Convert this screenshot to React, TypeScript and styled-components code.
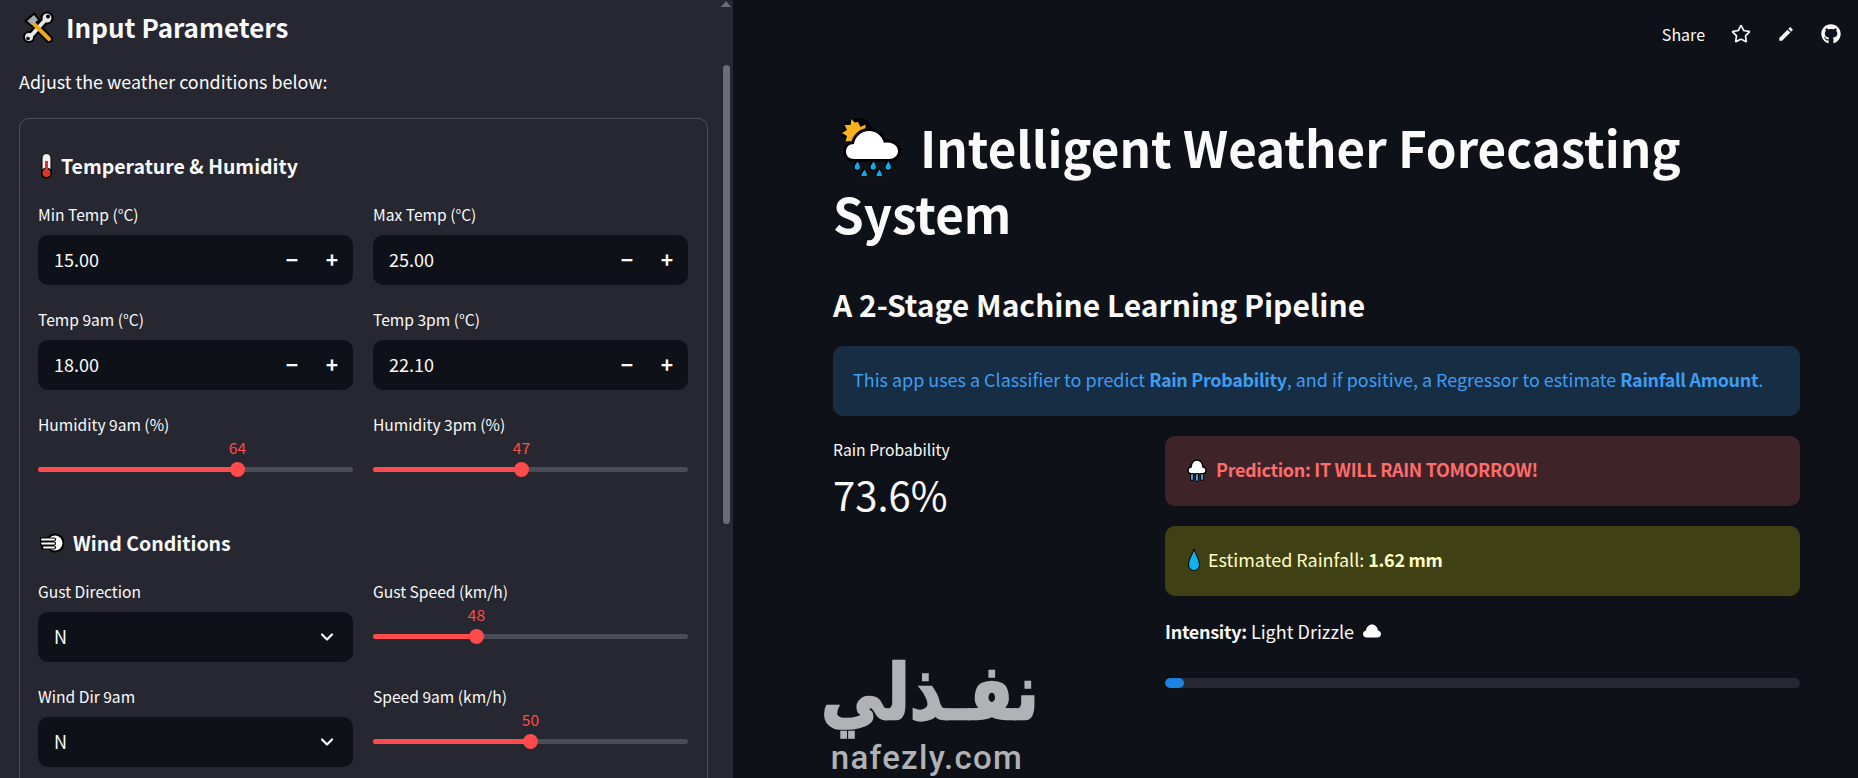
import React from 'react';
import styled, { createGlobalStyle } from 'styled-components';
import { ChevronDown, Star } from 'lucide-react';
import { FaGithub } from 'react-icons/fa';
import { MdEdit } from 'react-icons/md';

const fontStack = '"Noto Sans CJK SC", "Noto Sans", sans-serif';

const GlobalStyle = createGlobalStyle`
  html, body {
    margin: 0;
    padding: 0;
    height: 100%;
    background: #0e1117;
    overflow: hidden;
  }
  * {
    box-sizing: border-box;
  }
  b {
    letter-spacing: -0.3px;
  }
`;

const Page = styled.div`
  display: flex;
  position: relative;
  width: 1858px;
  height: 778px;
  overflow: hidden;
  background: #0e1117;
  color: #fafafa;
  font-family: ${fontStack};
`;

/* sidebar */
const Sidebar = styled.aside`
  position: relative;
  flex: 0 0 733px;
  height: 778px;
  padding: 0 25px 0 19px;
  overflow: hidden;
  background: #262730;
`;
const SideTitle = styled.h2`
  display: flex;
  align-items: center;
  gap: 11px;
  height: 56px;
  margin: 0 0 0 3px;
  padding-bottom: 2px;
  font-size: 26px;
  font-weight: 700;
  line-height: 36px;
`;
const Caption = styled.p`
  margin: 11px 0 23px;
  font-size: 17.9px;
  line-height: 28px;
`;
const Panel = styled.section`
  height: 800px;
  padding: 33px 18px 0;
  border: 1px solid rgba(250, 250, 250, 0.2);
  border-radius: 10px;
`;
const SectionHeading = styled.h3<{ $gap: number; $top?: number }>`
  display: flex;
  align-items: center;
  gap: ${({ $gap }) => $gap}px;
  height: 30px;
  margin: ${({ $top }) => $top ?? 0}px 0 23px;
  padding: 0 0 2px 2px;
  font-size: 19.5px;
  font-weight: 700;
  line-height: 28px;
`;
const FieldGrid = styled.div`
  display: grid;
  grid-template-columns: 315px 315px;
  column-gap: 20px;
  row-gap: 25px;
`;
const Field = styled.div`
  display: flex;
  flex-direction: column;
  gap: 8px;
`;
const Label = styled.label`
  height: 22px;
  font-size: 15.6px;
  line-height: 19px;
`;
const DarkControl = styled.div`
  display: flex;
  align-items: center;
  height: 50px;
  padding: 0 1px 2px 16px;
  border-radius: 10px;
  background: #0e1117;
  font-size: 18px;
`;
const ControlValue = styled.span`
  flex: 1;
`;
const StepButton = styled.span`
  display: flex;
  justify-content: center;
  align-items: center;
  width: 40px;
  height: 48px;
  font-size: 21px;
  font-weight: 700;
`;
const ChevronSlot = styled.span`
  display: flex;
  justify-content: center;
  width: 51px;
  padding-top: 2px;
`;
const SliderBox = styled.div`
  position: relative;
  height: 50px;
  padding-top: 22px;
`;
const Track = styled.div`
  height: 5px;
  overflow: hidden;
  border-radius: 3px;
  background: #4b4c55;
`;
const TrackFill = styled.div`
  height: 100%;
  background: #ff4b4b;
`;
const Thumb = styled.span`
  position: absolute;
  top: 17px;
  width: 15px;
  height: 15px;
  border-radius: 50%;
  background: #ff4b4b;
`;
const ThumbValue = styled.span`
  position: absolute;
  top: -9px;
  transform: translateX(-50%);
  color: #ff4b4b;
  font-size: 15.6px;
  line-height: 22px;
`;
const ScrollTrack = styled.div`
  position: absolute;
  top: 65px;
  right: 3px;
  width: 7px;
  height: 459px;
  border-radius: 4px;
  background: #6b6c74;
`;
const ScrollArrow = styled.div`
  position: absolute;
  top: 1px;
  right: 2px;
  width: 0;
  height: 0;
  border-left: 5px solid transparent;
  border-right: 5px solid transparent;
  border-bottom: 6px solid #6b6c74;
`;

/* main */
const Main = styled.main`
  flex: 1;
  min-width: 0;
`;
const Toolbar = styled.header`
  display: flex;
  justify-content: flex-end;
  align-items: center;
  gap: 26px;
  height: 68px;
  padding-right: 17px;
`;
const ShareText = styled.span`
  font-size: 16px;
  line-height: 20px;
`;
const Content = styled.div`
  padding: 0 58px 0 100px;
`;
const Title = styled.h1`
  margin: 46px 0 0;
  font-size: 49.3px;
  font-weight: 700;
  line-height: 66px;
`;
const TitleIcon = styled.span`
  display: inline-block;
  width: 87px;
  height: 30px;
  vertical-align: -4px;
  svg {
    display: block;
    margin: -26px 0 0 7px;
  }
`;
const Subtitle = styled.h2`
  margin: 36px 0 20px;
  font-size: 30px;
  font-weight: 700;
  line-height: 44px;
`;
const Banner = styled.div<{ $bg: string; $fg: string }>`
  display: flex;
  align-items: center;
  height: 70px;
  padding: 0 0 5px 20px;
  border-radius: 10px;
  background: ${({ $bg }) => $bg};
  color: ${({ $fg }) => $fg};
  font-size: 17.95px;
  line-height: 28px;
  white-space: pre;
`;
const BannerIcon = styled.span<{ $width: number }>`
  display: flex;
  justify-content: flex-start;
  width: ${({ $width }) => $width}px;
  padding-left: 2px;
  padding-top: 3px;
`;
const ResultGrid = styled.div`
  display: grid;
  grid-template-columns: 332px 635px;
  margin-top: 20px;
`;
const Metric = styled.div`
  padding-top: 3px;
`;
const MetricLabel = styled.div`
  font-size: 15.7px;
  line-height: 22px;
`;
const MetricValue = styled.div`
  margin-top: 7px;
  font-size: 40px;
  line-height: 52px;
`;
const ResultColumn = styled.div`
  display: flex;
  flex-direction: column;
  gap: 20px;
`;
const Intensity = styled.div`
  display: flex;
  align-items: center;
  gap: 8px;
  height: 28px;
  margin-top: 2px;
  padding-bottom: 2px;
  font-size: 18px;
  line-height: 26px;
  white-space: pre;
`;
const Progress = styled.div`
  height: 10px;
  margin-top: 32px;
  overflow: hidden;
  border-radius: 5px;
  background: #262730;
`;
const ProgressFill = styled.div`
  height: 100%;
  border-radius: 5px;
  background: #1c83e1;
`;

/* watermark over the page */
const Watermark = styled.div`
  position: absolute;
  left: 821px;
  top: 648px;
  width: 212px;
  color: #b1b2b6;
  text-align: center;
`;
const WatermarkArabic = styled.div`
  font-family: "DejaVu Sans", sans-serif;
  font-size: 64px;
  font-weight: 700;
  line-height: 90px;
  white-space: nowrap;
  -webkit-text-stroke: 2px #b1b2b6;
  transform: scaleY(1.2);
`;
const WatermarkLatin = styled.div`
  font-family: Roboto, sans-serif;
  font-size: 33px;
  font-weight: 500;
  letter-spacing: 1.3px;
  line-height: 40px;
`;

/* emoji drawings */
const ToolsIcon = () => (
  <svg width="33" height="33" viewBox="0 0 33 33" fill="none">
    <g strokeLinecap="round">
      <path d="M8 26 L25 7" stroke="#000" strokeWidth="8" />
      <path d="M9 9 L27 28" stroke="#000" strokeWidth="8" />
      <path d="M5 10 L12 4 L16 9 L10 14 Z" fill="#000" stroke="#000" strokeWidth="4" />
      <circle cx="25" cy="7" r="6.5" fill="#000" />
      <circle cx="7" cy="26" r="6" fill="#000" />
      <path d="M8 26 L25 7" stroke="#e6e7e8" strokeWidth="4" />
      <circle cx="25" cy="7" r="4.5" fill="#e6e7e8" />
      <circle cx="7" cy="26" r="4" fill="#e6e7e8" />
      <circle cx="26" cy="5.500" r="2" fill="#000" />
      <circle cx="6" cy="27.500" r="1.800" fill="#000" />
      <path d="M11 12 L27 28" stroke="#f0a81e" strokeWidth="4" />
      <path d="M5 10 L12 4 L16 9 L10 14 Z" fill="#a9abae" />
    </g>
  </svg>
);
const ThermometerIcon = () => (
  <svg width="13" height="26" viewBox="0 0 13 26" fill="none">
    <rect x="2" y="0.500" width="9" height="20" rx="4.500" fill="#f2f2f2" stroke="#000" />
    <circle cx="6.500" cy="20" r="5.500" fill="#000" />
    <circle cx="6.500" cy="20" r="4" fill="#d9362b" />
    <rect x="5" y="8" width="3" height="11" fill="#d9362b" />
  </svg>
);
const WindIcon = () => (
  <svg width="24" height="24" viewBox="0 0 24 24" fill="none">
    <circle cx="15" cy="12" r="9.500" fill="#000" />
    <circle cx="15" cy="12" r="7.500" fill="#fff" />
    <path d="M1 8.500h13M1 12.500h13M3 16.500h11" stroke="#000" strokeWidth="4.200" strokeLinecap="round" />
    <path d="M2 8.500h12M2 12.500h12M4 16.500h10" stroke="#fff" strokeWidth="2" strokeLinecap="round" />
  </svg>
);
const cloudPath =
  'M14 43c-5 0-8-3-8-7.500S9 28 14 28c1-7 7-13 15-13 8 0 13 5 15 12 1-.5 2-.5 3.500-.5 6 0 10.500 4 10.500 8.500S54 43 49 43z';
const drops = [
  [14, 44],
  [30, 44],
  [45, 44],
  [21, 52],
  [36, 52],
];
const SunCloudRainIcon = () => (
  <svg width="61" height="60" viewBox="0 0 61 60" fill="none">
    <circle cx="18" cy="17" r="15" fill="#000" />
    <path
      d="M18 3l3 6 6-3 0 7 7 0-3 6 5 4-14 8-6 4-4-6-7 1 2-7-6-3 5-4-3-6 7 0 1-7 4 4z"
      fill="#000"
    />
    <path
      d="M18 6l2.500 5 5-2.500 0 6 6 .5-3 5-8 8-8 2-2-5-5 .5 1.500-5.500-5-3 5-3-2.500-5 6 0 1-6 3 3.500z"
      fill="#f9b21a"
    />
    <path d={cloudPath} fill="#000" stroke="#000" strokeWidth="6" strokeLinejoin="round" />
    <path d={cloudPath} fill="#fff" />
    {drops.map(([x, y]) => (
      <g key={`${x}-${y}`} transform={`translate(${x} ${y})`}>
        <path d="M3 0C1 3-1 5-1 7a4 4 0 0 0 8 0C7 5 4.500 3 3 0z" fill="#000" />
        <path d="M3.500 1.500C2 4 .500 5.500.500 7a2.700 2.700 0 0 0 5.400 0C5.900 5 4.500 3.500 3.500 1.500z" fill="#12a9e5" />
      </g>
    ))}
  </svg>
);
const RainCloudIcon = () => (
  <svg width="20" height="23" viewBox="0 0 20 23" fill="none">
    <path
      d="M5 15c-2.500 0-4-1.500-4-3.500S2.500 8 4 8c.5-4 3-7 6-7s5.500 3 6 7c1.500 0 3 1.500 3 3.500S17.500 15 15 15z"
      fill="#fff"
      stroke="#000"
      strokeWidth="1.500"
    />
    <path d="M5 16v4M10 16v5M15 16v4" stroke="#000" strokeWidth="4" strokeLinecap="round" />
    <path d="M5 16v4M10 16v5M15 16v4" stroke="#35a7d8" strokeWidth="2" strokeLinecap="round" />
  </svg>
);
const DropletIcon = () => (
  <svg width="14" height="24" viewBox="0 0 14 24" fill="none">
    <path d="M7 1C5.500 7 1.500 11 1.500 17a5.500 5.500 0 0 0 11 0C12.500 11 8.500 7 7 1z" fill="#12b0ec" stroke="#000" />
  </svg>
);
const SmallCloudIcon = () => (
  <svg width="20" height="14" viewBox="0 0 20 14" fill="#fff">
    <path d="M5 13.500c-2.500 0-4-1.500-4-3.500 0-1.800 1.300-3.200 3-3.500C4.500 3 7 .5 10 .5s5.500 2.500 6 6c1.700.3 3 1.700 3 3.500 0 2-1.500 3.500-4 3.500z" />
  </svg>
);

const NumberInput = ({ label, value }: { label: string; value: string }) => (
  <Field>
    <Label>{label}</Label>
    <DarkControl>
      <ControlValue>{value}</ControlValue>
      <StepButton>−</StepButton>
      <StepButton>+</StepButton>
    </DarkControl>
  </Field>
);

const SelectInput = ({ label, value }: { label: string; value: string }) => (
  <Field>
    <Label>{label}</Label>
    <DarkControl>
      <ControlValue>{value}</ControlValue>
      <ChevronSlot>
        <ChevronDown size={20} strokeWidth={2.6} color="#fafafa" />
      </ChevronSlot>
    </DarkControl>
  </Field>
);

const Slider = ({ label, value, max }: { label: string; value: number; max: number }) => {
  const thumbLeft = (value / max) * 300;
  return (
    <Field>
      <Label>{label}</Label>
      <SliderBox>
        <Track>
          <TrackFill style={{ width: thumbLeft + 7 }} />
        </Track>
        <Thumb style={{ left: thumbLeft }} />
        <ThumbValue style={{ left: thumbLeft + 7.5 }}>{value}</ThumbValue>
      </SliderBox>
    </Field>
  );
};

const App = () => (
  <Page>
    <GlobalStyle />
    <Sidebar>
      <SideTitle>
        <ToolsIcon />
        Input Parameters
      </SideTitle>
      <Caption>Adjust the weather conditions below:</Caption>
      <Panel>
        <SectionHeading $gap={8}>
          <ThermometerIcon />
          Temperature &amp; Humidity
        </SectionHeading>
        <FieldGrid>
          <NumberInput label="Min Temp (°C)" value="15.00" />
          <NumberInput label="Max Temp (°C)" value="25.00" />
          <NumberInput label="Temp 9am (°C)" value="18.00" />
          <NumberInput label="Temp 3pm (°C)" value="22.10" />
          <Slider label="Humidity 9am (%)" value={64} max={100} />
          <Slider label="Humidity 3pm (%)" value={47} max={100} />
        </FieldGrid>
        <SectionHeading $gap={9} $top={34}>
          <WindIcon />
          Wind Conditions
        </SectionHeading>
        <FieldGrid>
          <SelectInput label="Gust Direction" value="N" />
          <Slider label="Gust Speed (km/h)" value={48} max={150} />
          <SelectInput label="Wind Dir 9am" value="N" />
          <Slider label="Speed 9am (km/h)" value={50} max={100} />
        </FieldGrid>
      </Panel>
      <ScrollArrow />
      <ScrollTrack />
    </Sidebar>
    <Main>
      <Toolbar>
        <ShareText>Share</ShareText>
        <Star size={20} strokeWidth={2} color="#fafafa" />
        <MdEdit size={18} color="#fafafa" />
        <FaGithub size={20} color="#fafafa" />
      </Toolbar>
      <Content>
        <Title>
          <TitleIcon>
            <SunCloudRainIcon />
          </TitleIcon>
          Intelligent Weather Forecasting System
        </Title>
        <Subtitle>A 2-Stage Machine Learning Pipeline</Subtitle>
        <Banner $bg="#172d43" $fg="#3d9df3">
          This app uses a Classifier to predict <b>Rain Probability</b>, and if positive, a Regressor to
          estimate <b>Rainfall Amount</b>.
        </Banner>
        <ResultGrid>
          <Metric>
            <MetricLabel>Rain Probability</MetricLabel>
            <MetricValue>73.6%</MetricValue>
          </Metric>
          <ResultColumn>
            <Banner $bg="#3e2428" $fg="#ff6c6c">
              <BannerIcon $width={31}>
                <RainCloudIcon />
              </BannerIcon>
              <b>Prediction: IT WILL RAIN TOMORROW!</b>
            </Banner>
            <Banner $bg="#3f4115" $fg="#ffffc2">
              <BannerIcon $width={23}>
                <DropletIcon />
              </BannerIcon>
              Estimated Rainfall: <b>1.62 mm</b>
            </Banner>
            <div>
              <Intensity>
                <span>
                  <b>Intensity:</b> Light Drizzle
                </span>
                <SmallCloudIcon />
              </Intensity>
              <Progress>
                <ProgressFill style={{ width: '3%' }} />
              </Progress>
            </div>
          </ResultColumn>
        </ResultGrid>
      </Content>
    </Main>
    <Watermark>
      <WatermarkArabic>نفـذلي</WatermarkArabic>
      <WatermarkLatin>nafezly.com</WatermarkLatin>
    </Watermark>
  </Page>
);

export default App;
